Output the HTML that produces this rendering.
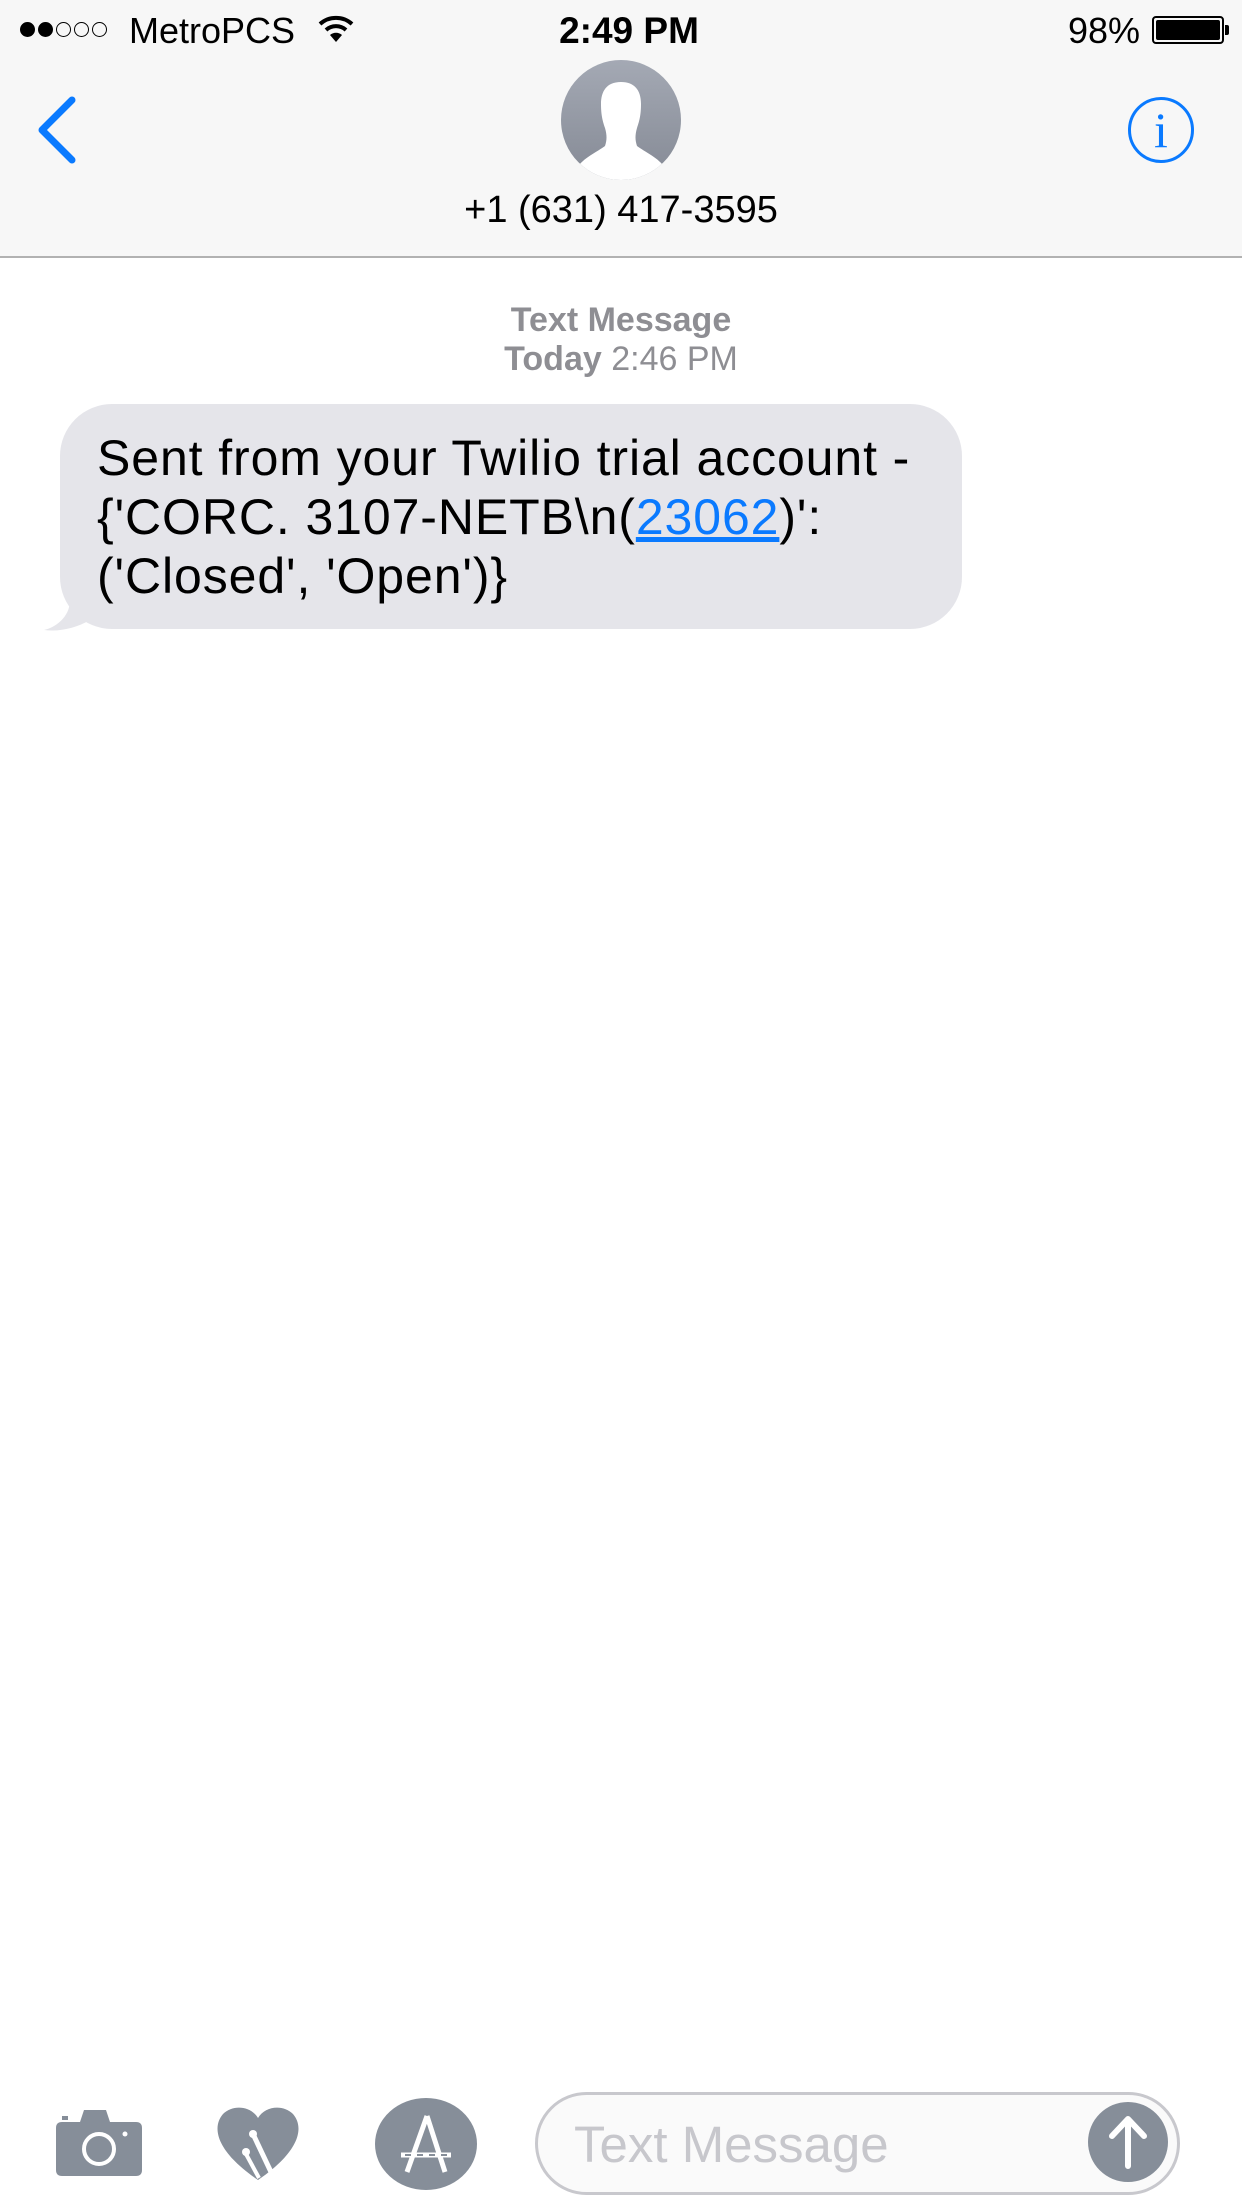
<!DOCTYPE html>
<html><head><meta charset="utf-8"><style>
*{margin:0;padding:0;box-sizing:border-box}
body{width:1242px;height:2208px;background:#fff;font-family:"Liberation Sans",sans-serif;position:relative;overflow:hidden}
.abs{position:absolute}
</style></head><body>
<div class="abs" style="left:0;top:0;width:1242px;height:258px;background:#f7f7f7;border-bottom:2px solid #b2b2b2"></div>
<!-- status bar -->
<div class="abs" style="left:20px;top:22px;display:flex;gap:3px;align-items:center">
<span style="width:15px;height:15px;border-radius:50%;background:#000;display:inline-block"></span>
<span style="width:15px;height:15px;border-radius:50%;background:#000;display:inline-block"></span>
<span style="width:15px;height:15px;border-radius:50%;border:1.5px solid #000;display:inline-block"></span>
<span style="width:15px;height:15px;border-radius:50%;border:1.5px solid #000;display:inline-block"></span>
<span style="width:15px;height:15px;border-radius:50%;border:1.5px solid #000;display:inline-block"></span>
</div>
<div class="abs" style="left:129px;top:10px;font-size:36px;color:#000">MetroPCS</div>
<svg class="abs" style="left:318px;top:14px" width="36" height="30" viewBox="0 0 36 30"><path d="M2 10 A24 24 0 0 1 34 10" stroke="#000" stroke-width="4" fill="none"/><path d="M8 16 A15 15 0 0 1 28 16" stroke="#000" stroke-width="4" fill="none"/><path d="M12 21 L18 28 L24 21 A9 9 0 0 0 12 21Z" fill="#000"/></svg>
<div class="abs" style="left:8px;width:1242px;top:10px;text-align:center;font-size:37px;font-weight:bold;color:#000">2:49 PM</div>
<div class="abs" style="left:1068px;top:10px;font-size:36px;color:#000">98%</div>
<div class="abs" style="left:1152px;top:16px;width:72px;height:28px;border:2px solid #000;border-radius:4px;padding:2px"><div style="width:64px;height:20px;background:#000;border-radius:2px"></div></div>
<div class="abs" style="left:1225px;top:25px;width:4px;height:10px;background:#000;border-radius:0 2px 2px 0"></div>
<!-- nav -->
<svg class="abs" style="left:34px;top:96px" width="46" height="68" viewBox="0 0 46 68"><path d="M38 4 L8 34 L38 64" stroke="#0a7aff" stroke-width="7" fill="none" stroke-linecap="round" stroke-linejoin="round"/></svg>
<svg class="abs" style="left:561px;top:60px" width="120" height="120" viewBox="0 0 120 120"><defs><linearGradient id="g" x1="0" y1="0" x2="0" y2="1"><stop offset="0" stop-color="#a4a9b4"/><stop offset="1" stop-color="#858a95"/></linearGradient><clipPath id="c"><circle cx="60" cy="60" r="60"/></clipPath></defs><circle cx="60" cy="60" r="60" fill="url(#g)"/><g clip-path="url(#c)" fill="#fff"><path d="M60 22 C45 22 40 32 40 44 C40 56 42 62 44 68 C46 75 46 80 44 86 C36 92 22 98 16 108 L16 125 L104 125 L104 108 C98 98 84 92 76 86 C74 80 74 75 76 68 C78 62 80 56 80 44 C80 32 75 22 60 22Z"/></g></svg>
<div class="abs" style="left:0;width:1242px;top:189px;text-align:center;font-size:38px;color:#000">+1 (631) 417-3595</div>
<div class="abs" style="left:1128px;top:97px;width:66px;height:66px;border:3px solid #0a7aff;border-radius:50%;text-align:center;font-family:'Liberation Serif',serif;font-size:50px;line-height:60px;color:#0a7aff">i</div>
<!-- timestamp -->
<div class="abs" style="left:0;width:1242px;top:301px;text-align:center;font-size:34px;font-weight:bold;color:#8e8e93">Text Message</div>
<div class="abs" style="left:0;width:1242px;top:340px;text-align:center;font-size:34px;color:#8e8e93"><b>Today</b> 2:46 PM</div>
<!-- bubble -->
<svg class="abs" style="left:40px;top:580px" width="60" height="52" viewBox="0 0 60 52"><path d="M30 0 L30 20 C30 38 14 48 4 50 C20 52 36 48 50 40 L60 40 L60 0Z" fill="#e5e5ea"/></svg>
<div class="abs" style="left:60px;top:404px;width:902px;height:225px;background:#e5e5ea;border-radius:52px"></div>
<div class="abs" style="left:97px;top:429px;font-size:50px;line-height:59px;color:#000;white-space:nowrap;letter-spacing:0.9px">Sent from your Twilio trial account -<br>{'CORC. 3107-NETB\n(<span style="color:#0a7aff;text-decoration:underline">23062</span>)':<br>('Closed', 'Open')}</div>
<!-- bottom bar -->
<svg class="abs" style="left:56px;top:2108px" width="86" height="68" viewBox="0 0 86 68"><path d="M6 14 H24 L28 2 H50 L54 14 H80 Q86 14 86 20 V62 Q86 68 80 68 H6 Q0 68 0 62 V20 Q0 14 6 14Z" fill="#868e99"/><rect x="6" y="8" width="6" height="4" fill="#868e99"/><circle cx="43" cy="41" r="15" fill="none" stroke="#fff" stroke-width="4"/><circle cx="69" cy="26" r="2.5" fill="#fff"/></svg>
<svg class="abs" style="left:215px;top:2106px" width="86" height="74" viewBox="0 0 86 74"><path d="M43 12 C36 0 18 -2 8 8 C-4 22 2 46 43 74 C84 46 90 22 78 8 C68 -2 50 0 43 12Z" fill="#868e99"/><path d="M38 28 L56 66" stroke="#fff" stroke-width="5"/><circle cx="38" cy="28" r="4" fill="#fff"/><circle cx="31" cy="46" r="4" fill="#fff"/><path d="M31 48 L44 72" stroke="#fff" stroke-width="4"/></svg>
<svg class="abs" style="left:375px;top:2098px" width="102" height="92" viewBox="0 0 102 92"><ellipse cx="51" cy="46" rx="51" ry="46" fill="#868e99"/><path d="M52 18 L32 74 M52 18 L70 74 M26 57 H76" stroke="#fff" stroke-width="5" fill="none"/><path d="M30 57 H72" stroke="#868e99" stroke-width="2" stroke-dasharray="6 6"/></svg>
<div class="abs" style="left:535px;top:2092px;width:645px;height:103px;border:3px solid #c8c8cd;border-radius:52px;background:#fafafa"></div>
<div class="abs" style="left:574px;top:2115px;font-size:51px;color:#c7c7cc">Text Message</div>
<svg class="abs" style="left:1088px;top:2102px" width="80" height="80" viewBox="0 0 80 80"><circle cx="40" cy="40" r="40" fill="#868e99"/><path d="M40 64 V18 M24 34 L40 17 L56 34" stroke="#fff" stroke-width="6" fill="none" stroke-linecap="round" stroke-linejoin="round"/></svg>
</body></html>
